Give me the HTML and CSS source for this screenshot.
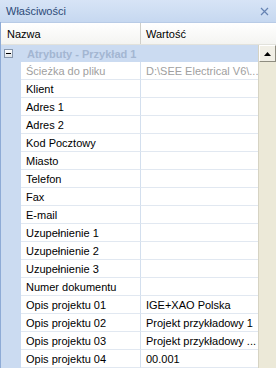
FILE: index.html
```html
<!DOCTYPE html>
<html>

<head>
    <title>Właściwości</title>
    <link rel="stylesheet" href="styles.css">
</head>

<body>
    <div class="panel">
        <div class="title-bar">
            <span class="title">Właściwości</span>
            <svg class="close" width="9" height="9" viewBox="0 0 9 9"><path d="M1 1 L8 8 M8 1 L1 8" stroke="#6683b3" stroke-width="1.2" fill="none"/></svg>
        </div>
        <div class="grid">
            <div class="header">
                <div class="col-name">Nazwa</div>
                <div class="col-value">Wartość</div>
            </div>
            <div class="grid-body">
                <div class="content">
                    <div class="category">
                        <span class="toggle"></span>
                        <span class="category-name">Atrybuty - Przykład 1</span>
                    </div>
                    <div class="row disabled"><div class="name">Ścieżka do pliku</div><div class="value">D:\SEE Electrical V6\...</div></div>
                    <div class="row"><div class="name">Klient</div><div class="value"></div></div>
                    <div class="row"><div class="name">Adres 1</div><div class="value"></div></div>
                    <div class="row"><div class="name">Adres 2</div><div class="value"></div></div>
                    <div class="row"><div class="name">Kod Pocztowy</div><div class="value"></div></div>
                    <div class="row"><div class="name">Miasto</div><div class="value"></div></div>
                    <div class="row"><div class="name">Telefon</div><div class="value"></div></div>
                    <div class="row"><div class="name">Fax</div><div class="value"></div></div>
                    <div class="row"><div class="name">E-mail</div><div class="value"></div></div>
                    <div class="row"><div class="name">Uzupełnienie 1</div><div class="value"></div></div>
                    <div class="row"><div class="name">Uzupełnienie 2</div><div class="value"></div></div>
                    <div class="row"><div class="name">Uzupełnienie 3</div><div class="value"></div></div>
                    <div class="row"><div class="name">Numer dokumentu</div><div class="value"></div></div>
                    <div class="row"><div class="name">Opis projektu 01</div><div class="value">IGE+XAO Polska</div></div>
                    <div class="row"><div class="name">Opis projektu 02</div><div class="value">Projekt przykładowy 1</div></div>
                    <div class="row"><div class="name">Opis projektu 03</div><div class="value">Projekt przykładowy ...</div></div>
                    <div class="row"><div class="name">Opis projektu 04</div><div class="value">00.001</div></div>
                </div>
                <div class="scrollbar">
                    <div class="scroll-up">
                        <svg width="7" height="4" viewBox="0 0 7 4"><path d="M3.5 0 L7 4 L0 4 Z" fill="#000"/></svg>
                    </div>
                    <div class="scroll-track"></div>
                </div>
            </div>
        </div>
    </div>
</body>

</html>
```

FILE: styles.css
```css
* {
    margin: 0;
    padding: 0;
    box-sizing: border-box;
}

body {
    font: 11px "Liberation Sans", Arial, sans-serif;
    background: #ffffff;
}

.panel {
    width: 276px;
    height: 368px;
    overflow: hidden;
    display: flex;
    flex-direction: column;
}

.title-bar {
    height: 22px;
    flex-shrink: 0;
    display: flex;
    align-items: center;
    justify-content: space-between;
    padding: 0 7px 0 6px;
    background: linear-gradient(#d7e4f6, #c6d8f0);
    color: #2c4a78;
}

.grid {
    flex: 1;
    display: flex;
    flex-direction: column;
    border-left: 1px solid #8eabd6;
}

.header {
    height: 23px;
    flex-shrink: 0;
    display: flex;
    align-items: center;
    background: linear-gradient(#ffffff, #f4f4f1);
    border-top: 1px solid #b8cbe6;
    border-bottom: 1px solid #e2e2dc;
    color: #000;
}

.col-name {
    width: 140px;
    height: 100%;
    display: flex;
    align-items: center;
    padding-left: 6px;
    border-right: 1px solid #cfcfca;
}

.col-value {
    flex: 1;
    padding-left: 5px;
}

.grid-body {
    flex: 1;
    display: flex;
}

.content {
    flex: 1;
    display: flex;
    flex-direction: column;
}

.category {
    height: 17px;
    flex-shrink: 0;
    display: flex;
    align-items: center;
    background: #cbdbf1;
    padding-left: 3px;
}

.toggle {
    width: 9px;
    height: 9px;
    border: 1px solid #8797ad;
    background: linear-gradient(#ffffff, #dde3ea);
    position: relative;
    margin-right: 14px;
}

.toggle::after {
    content: "";
    position: absolute;
    left: 1px;
    top: 3px;
    width: 5px;
    height: 1px;
    background: #000;
}

.category-name {
    font-weight: bold;
    color: #a3b6d2;
}

.row {
    height: 18px;
    flex-shrink: 0;
    display: flex;
    background: #cbdbf1;
}

.name {
    width: 120px;
    margin-left: 20px;
    padding: 3px 0 0 5px;
    background: #fff;
    border-bottom: 1px solid #e1e8f1;
    border-right: 1px solid #d3dfee;
    white-space: nowrap;
    overflow: hidden;
}

.value {
    flex: 1;
    padding: 3px 0 0 5px;
    background: #fff;
    border-bottom: 1px solid #e1e8f1;
    white-space: nowrap;
    overflow: hidden;
}

.disabled .name,
.disabled .value {
    color: #a0a0a0;
}

.scrollbar {
    width: 18px;
    display: flex;
    flex-direction: column;
    background: #ece9d8;
    border-left: 1px solid #d6d3c3;
}

.scroll-up {
    height: 17px;
    display: flex;
    align-items: center;
    justify-content: center;
    background: #f1efe6;
    border: 1px solid;
    border-color: #ffffff #8e8c80 #8e8c80 #ffffff;
}

.scroll-track {
    flex: 1;
}
```
